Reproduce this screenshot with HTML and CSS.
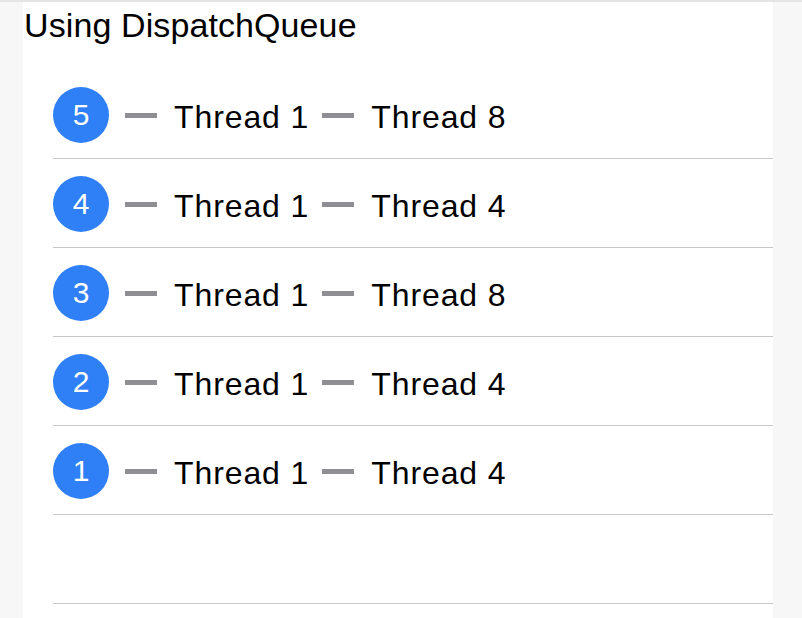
FILE: index.html
```html
<!DOCTYPE html>
<html>
<head>
<meta charset="utf-8">
<link rel="stylesheet" href="styles.css">
</head>
<body>
<div class="topbar"></div>
<div class="page">
  <div class="content">
    <div class="title">Using DispatchQueue</div>
    <div class="list">
      <div class="row"><span class="badge">5</span><span class="dash"></span><span class="label">Thread 1</span><span class="dash"></span><span class="label">Thread 8</span></div>
      <div class="row"><span class="badge">4</span><span class="dash"></span><span class="label">Thread 1</span><span class="dash"></span><span class="label">Thread 4</span></div>
      <div class="row"><span class="badge">3</span><span class="dash"></span><span class="label">Thread 1</span><span class="dash"></span><span class="label">Thread 8</span></div>
      <div class="row"><span class="badge">2</span><span class="dash"></span><span class="label">Thread 1</span><span class="dash"></span><span class="label">Thread 4</span></div>
      <div class="row"><span class="badge">1</span><span class="dash"></span><span class="label">Thread 1</span><span class="dash"></span><span class="label">Thread 4</span></div>
      <div class="row"></div>
    </div>
  </div>
</div>
</body>
</html>
```

FILE: styles.css
```css
html, body {
  margin: 0;
  padding: 0;
  background: #f7f7f7;
  font-family: "Liberation Sans", Arial, sans-serif;
  color: #000;
  height: 100%;
  overflow: hidden;
}
.topbar {
  height: 2px;
  background: #e5e5e5;
}
.page {
  display: flex;
  height: 616px;
}
.content {
  margin-left: 23px;
  width: 750px;
  background: #fff;
  display: flex;
  flex-direction: column;
}
.title {
  font-size: 34px;
  line-height: 40px;
  letter-spacing: 0.1px;
  padding-top: 3px;
  padding-left: 1px;
  height: 68px;
  box-sizing: border-box;
}
.list {
  margin-left: 30px;
  display: flex;
  flex-direction: column;
}
.row {
  height: 88px;
  border-bottom: 1px solid #c8c7cc;
  display: flex;
  align-items: center;
}
.badge {
  width: 56px;
  height: 56px;
  border-radius: 50%;
  background: #2f80f6;
  color: #fff;
  font-size: 30px;
  display: flex;
  align-items: center;
  justify-content: center;
  margin-top: 2px;
  margin-right: 16px;
}
.dash {
  width: 32px;
  height: 5px;
  background: #8e8e93;
  margin-top: 2px;
  margin-right: 17px;
}
.label {
  font-size: 32px;
  line-height: 37px;
  letter-spacing: 0.9px;
  margin-top: 6px;
  margin-right: 13px;
}
```
